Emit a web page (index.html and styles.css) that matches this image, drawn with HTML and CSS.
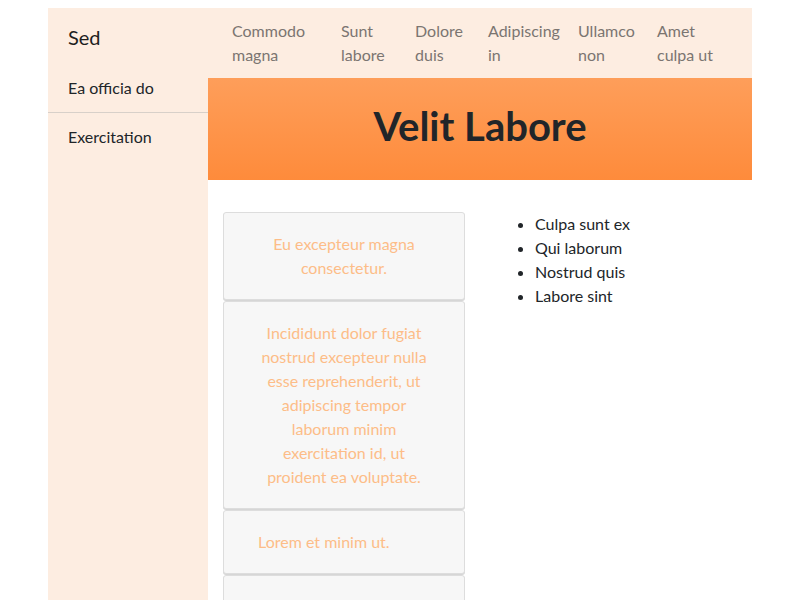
FILE: index.html
```html
<!DOCTYPE html>
<html>
<head>
<meta charset="utf-8">
<link rel="stylesheet" href="styles.css">
</head>
<body>
<div class="shell">
  <aside class="sidebar">
    <div class="brand">Sed</div>
    <a class="side-link first">Ea officia do</a>
    <a class="side-link">Exercitation</a>
  </aside>
  <div class="main">
    <nav class="topnav">
      <a class="nav-link">Commodo<br>magna</a>
      <a class="nav-link">Sunt<br>labore</a>
      <a class="nav-link">Dolore<br>duis</a>
      <a class="nav-link">Adipiscing<br>in</a>
      <a class="nav-link">Ullamco<br>non</a>
      <a class="nav-link">Amet<br>culpa ut</a>
    </nav>
    <header class="hero">
      <h1>Velit Labore</h1>
    </header>
    <section class="content">
      <div class="cards">
        <div class="card">Eu excepteur magna consectetur.</div>
        <div class="card">Incididunt dolor fugiat nostrud excepteur nulla esse reprehenderit, ut adipiscing tempor laborum minim exercitation id, ut proident ea voluptate.</div>
        <div class="card left">Lorem et minim ut.</div>
        <div class="card empty"></div>
      </div>
      <ul class="list">
        <li>Culpa sunt ex</li>
        <li>Qui laborum</li>
        <li>Nostrud quis</li>
        <li>Labore sint</li>
      </ul>
    </section>
  </div>
</div>
</body>
</html>
```
FILE: styles.css
```css
html, body {
  margin: 0;
  padding: 0;
  background: #ffffff;
}
body {
  font-family: Lato, "Open Sans", sans-serif;
  font-size: 16px;
  line-height: 24px;
  color: #212529;
  height: 600px;
  overflow: hidden;
}
.shell {
  width: 704px;
  margin: 8px auto 0;
  display: flex;
  min-height: 592px;
}
.sidebar {
  width: 160px;
  flex: none;
  background: #fdede1;
  display: flex;
  flex-direction: column;
}
.brand {
  font-size: 20px;
  line-height: 30px;
  color: #1e1e1e;
  padding: 14px 20px 12px;
}
.side-link {
  display: block;
  padding: 12px 20px;
  color: #212529;
}
.side-link.first {
  border-bottom: 1px solid #d8d0c9;
}
.main {
  flex: 1;
  display: flex;
  flex-direction: column;
}
.topnav {
  background: #fdede1;
  height: 70px;
  box-sizing: border-box;
  padding: 11px 0 0 24px;
  display: grid;
  grid-template-columns: 109px 74px 73px 90px 79px 1fr;
  color: #7b7571;
}
.nav-link {
  display: block;
}
.hero {
  height: 102px;
  box-sizing: border-box;
  padding-bottom: 6px;
  background: linear-gradient(180deg, #fe9e5a 0%, #fe8b3b 100%);
  display: flex;
  align-items: center;
  justify-content: center;
}
.hero h1 {
  margin: 0;
  font-size: 40px;
  line-height: 48px;
  font-weight: 700;
  color: #212529;
}
.content {
  padding: 32px 15px 0;
  display: grid;
  grid-template-columns: 242px 1fr;
  column-gap: 38px;
  align-items: start;
}
.cards {
  display: flex;
  flex-direction: column;
  gap: 1px;
}
.card {
  background: #f7f7f7;
  border: 1px solid #dddddd;
  border-radius: 3px;
  box-shadow: 0 1px 0 #d6d6d6;
  padding: 19px 34px 19px;
  text-align: center;
  color: #fdbd88;
}
.card.left {
  text-align: left;
}
.card.empty {
  height: 40px;
}
.list {
  margin: 0;
  padding-left: 32px;
}
```
